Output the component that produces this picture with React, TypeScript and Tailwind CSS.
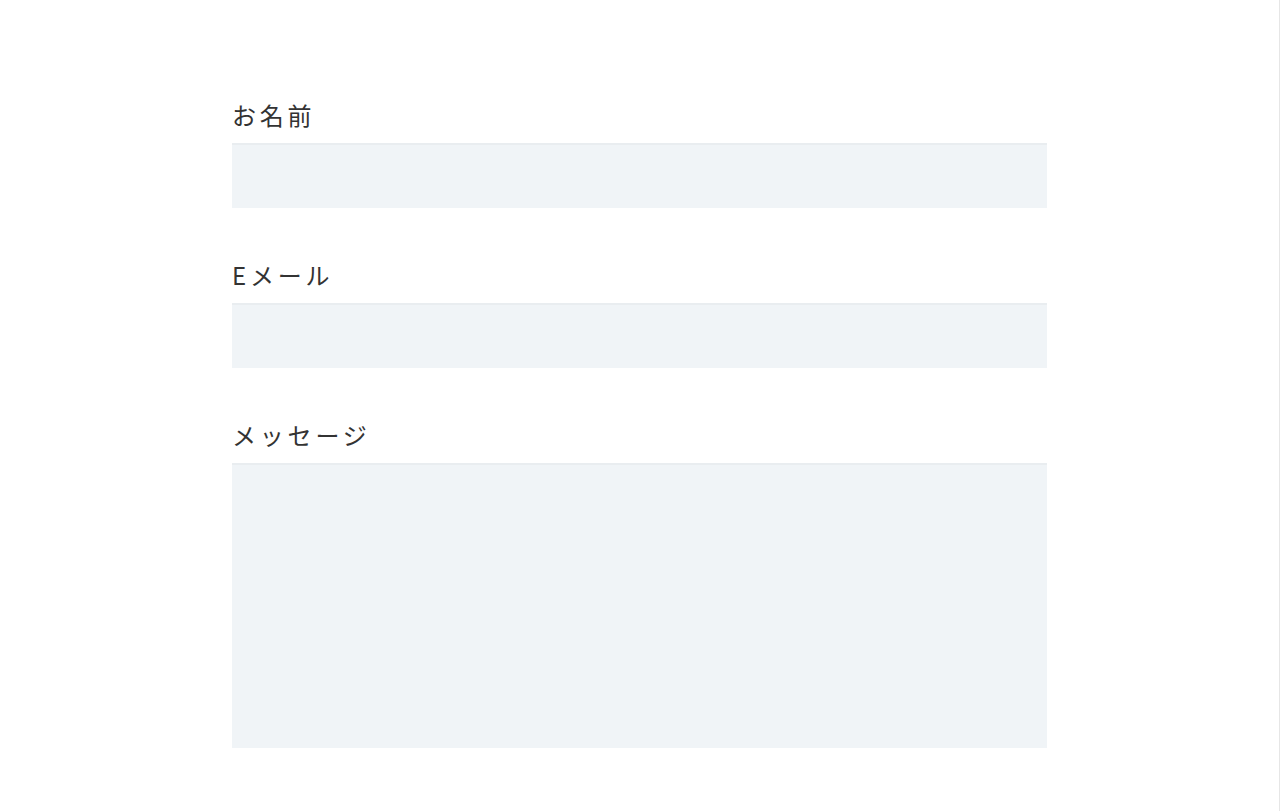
import React from "react";

const labelCls =
  "block text-[24px] leading-[36px] tracking-[3.8px] text-[#333333] [font-family:'Noto_Sans_CJK_JP','Noto_Sans',sans-serif]";

const fieldCls =
  "block w-full bg-[#f0f4f7] shadow-[inset_0_2px_0_#e9edf0] outline-none border-0";

export default function App() {
  return (
    <div className="min-h-[811px] w-full bg-white border-r border-[#e6e6e6]">
      <form className="mx-auto w-[815px] pt-[97px] flex flex-col gap-[49px]">
        <div className="flex flex-col gap-[10px]">
          <label className={labelCls}>お名前</label>
          <input type="text" className={`${fieldCls} h-[65px]`} />
        </div>
        <div className="flex flex-col gap-[10px]">
          <label className={labelCls}>Eメール</label>
          <input type="email" className={`${fieldCls} h-[65px]`} />
        </div>
        <div className="flex flex-col gap-[10px]">
          <label className={labelCls}>メッセージ</label>
          <textarea className={`${fieldCls} h-[285px] resize-none`} />
        </div>
      </form>
    </div>
  );
}
